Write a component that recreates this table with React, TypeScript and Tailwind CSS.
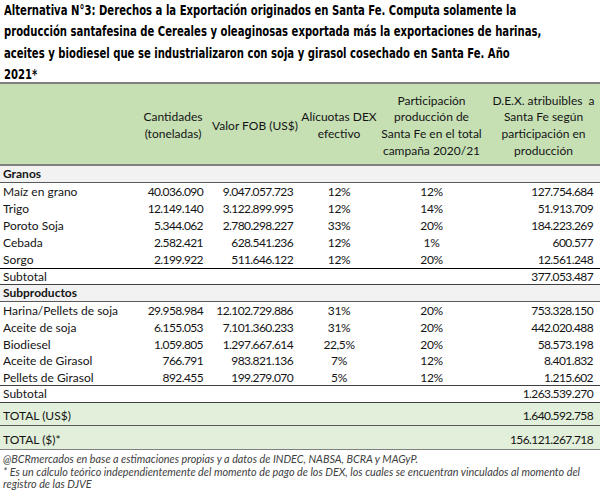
import React from "react";

const body = { fontFamily: "Lato, 'Open Sans', sans-serif" };

type Row = { l: string; c?: string; v?: string; a?: string; p?: string; d?: string };

const granos: Row[] = [
  { l: "Maíz en grano", c: "40.036.090", v: "9.047.057.723", a: "12%", p: "12%", d: "127.754.684" },
  { l: "Trigo", c: "12.149.140", v: "3.122.899.995", a: "12%", p: "14%", d: "51.913.709" },
  { l: "Poroto Soja", c: "5.344.062", v: "2.780.298.227", a: "33%", p: "20%", d: "184.223.269" },
  { l: "Cebada", c: "2.582.421", v: "628.541.236", a: "12%", p: "1%", d: "600.577" },
  { l: "Sorgo", c: "2.199.922", v: "511.646.122", a: "12%", p: "20%", d: "12.561.248" },
];

const subs: Row[] = [
  { l: "Harina/Pellets de soja", c: "29.958.984", v: "12.102.729.886", a: "31%", p: "20%", d: "753.328.150" },
  { l: "Aceite de soja", c: "6.155.053", v: "7.101.360.233", a: "31%", p: "20%", d: "442.020.488" },
  { l: "Biodiesel", c: "1.059.805", v: "1.297.667.614", a: "22,5%", p: "20%", d: "58.573.198" },
  { l: "Aceite de Girasol", c: "766.791", v: "983.821.136", a: "7%", p: "12%", d: "8.401.832" },
  { l: "Pellets de Girasol", c: "892.455", v: "199.279.070", a: "5%", p: "12%", d: "1.215.602" },
];

const subsH = ["h-[17px]", "h-[17px]", "h-[16px]", "h-[17px]", "h-[16px]"];

function DataRow({ r, h, cls = "" }: { r: Row; h: string; cls?: string }) {
  return (
    <div className={`grid grid-cols-[138px_70px_90px_82px_103px_117px] items-center ${h} ${cls}`}>
      <div className="pl-[3px] whitespace-nowrap">{r.l}</div>
      <div className="text-right pr-[5px] tracking-[-0.6px]">{r.c}</div>
      <div className="text-right pr-[5px] tracking-[-0.6px]">{r.v}</div>
      <div className="text-center tracking-[-0.4px]">{r.a}</div>
      <div className="text-center tracking-[-0.4px]">{r.p}</div>
      <div className="text-right pr-[7px] tracking-[-0.6px]">{r.d}</div>
    </div>
  );
}

export default function App() {
  return (
    <div className="w-[600px] h-[496px] bg-white overflow-hidden text-[#141414]">
      <div
        className="h-[82px] pl-[5px] text-[14px] leading-[21.3px] font-bold text-black whitespace-nowrap origin-left scale-x-[0.8]"
        style={{ fontFamily: "'DejaVu Sans Condensed', 'DejaVu Sans', sans-serif" }}
      >
        Alternativa N°3: Derechos a la Exportación originados en Santa Fe. Computa solamente la
        <br />
        producción santafesina de Cereales y oleaginosas exportada más la exportaciones de harinas,
        <br />
        aceites y biodiesel que se industrializaron con soja y girasol cosechado en Santa Fe. Año
        <br />
        2021*
      </div>

      <div className="text-[12px]" style={body}>
        {/* header */}
        <div className="grid grid-cols-[138px_70px_90px_82px_103px_117px] h-[84px] border-y-2 border-[#808080] bg-[#c6e0b4] items-center text-center leading-[16.7px] pt-[4px] whitespace-nowrap">
          <div />
          <div>
            Cantidades
            <br />
            (toneladas)
          </div>
          <div className="pl-[4px]">Valor FOB (US$)</div>
          <div>
            Alícuotas DEX
            <br />
            efectivo
          </div>
          <div>
            Participación
            <br />
            producción de
            <br />
            Santa Fe en el total
            <br />
            campaña 2020/21
          </div>
          <div className="pl-[4px]">
            D.E.X. atribuibles&nbsp; a
            <br />
            Santa Fe según
            <br />
            participación en
            <br />
            producción
          </div>
        </div>

        {/* Granos */}
        <div className="h-[17px] bg-[#f2f2f2] border-b border-[#595959] font-bold pl-[3px] flex items-center">
          Granos
        </div>
        {granos.map((r) => (
          <DataRow key={r.l} r={r} h="h-[17px]" />
        ))}
        <div className="h-[17px] border-t border-black border-b border-b-[#404040] flex items-center justify-between pl-[3px] pr-[7px]">
          <span>Subtotal</span>
          <span className="tracking-[-0.6px]">377.053.487</span>
        </div>
        <div className="h-[17px] bg-[#f2f2f2] border-b border-[#595959] font-bold pl-[3px] flex items-center">
          Subproductos
        </div>
        {subs.map((r, i) => (
          <DataRow key={r.l} r={r} h={subsH[i]} />
        ))}
        <div className="h-[18px] border-y border-[#404040] flex items-center justify-between pl-[3px] pr-[7px]">
          <span>Subtotal</span>
          <span className="tracking-[-0.6px]">1.263.539.270</span>
        </div>
        <div className="h-[23px] bg-[#e2efda] border-b border-[#595959] flex items-center justify-between pl-[3px] pr-[7px] pt-[3px]">
          <span>TOTAL (US$)</span>
          <span className="tracking-[-0.6px]">1.640.592.758</span>
        </div>
        <div className="h-[24px] bg-[#e2efda] border-b border-[#808080] flex items-center justify-between pl-[3px] pr-[7px] pt-[4px]">
          <span>TOTAL ($)*</span>
          <span className="tracking-[-0.6px]">156.121.267.718</span>
        </div>

        <div className="pl-[3px] pt-[3px] text-[10.8px] leading-[12.7px] italic text-[#404040] whitespace-nowrap">
          @BCRmercados en base a estimaciones propias y a datos de INDEC, NABSA, BCRA y MAGyP.
          <br />* Es un cálculo teórico independientemente del momento de pago de los DEX, los cuales se encuentran vinculados al momento del
          <br />
          registro de las DJVE
        </div>
      </div>
    </div>
  );
}
